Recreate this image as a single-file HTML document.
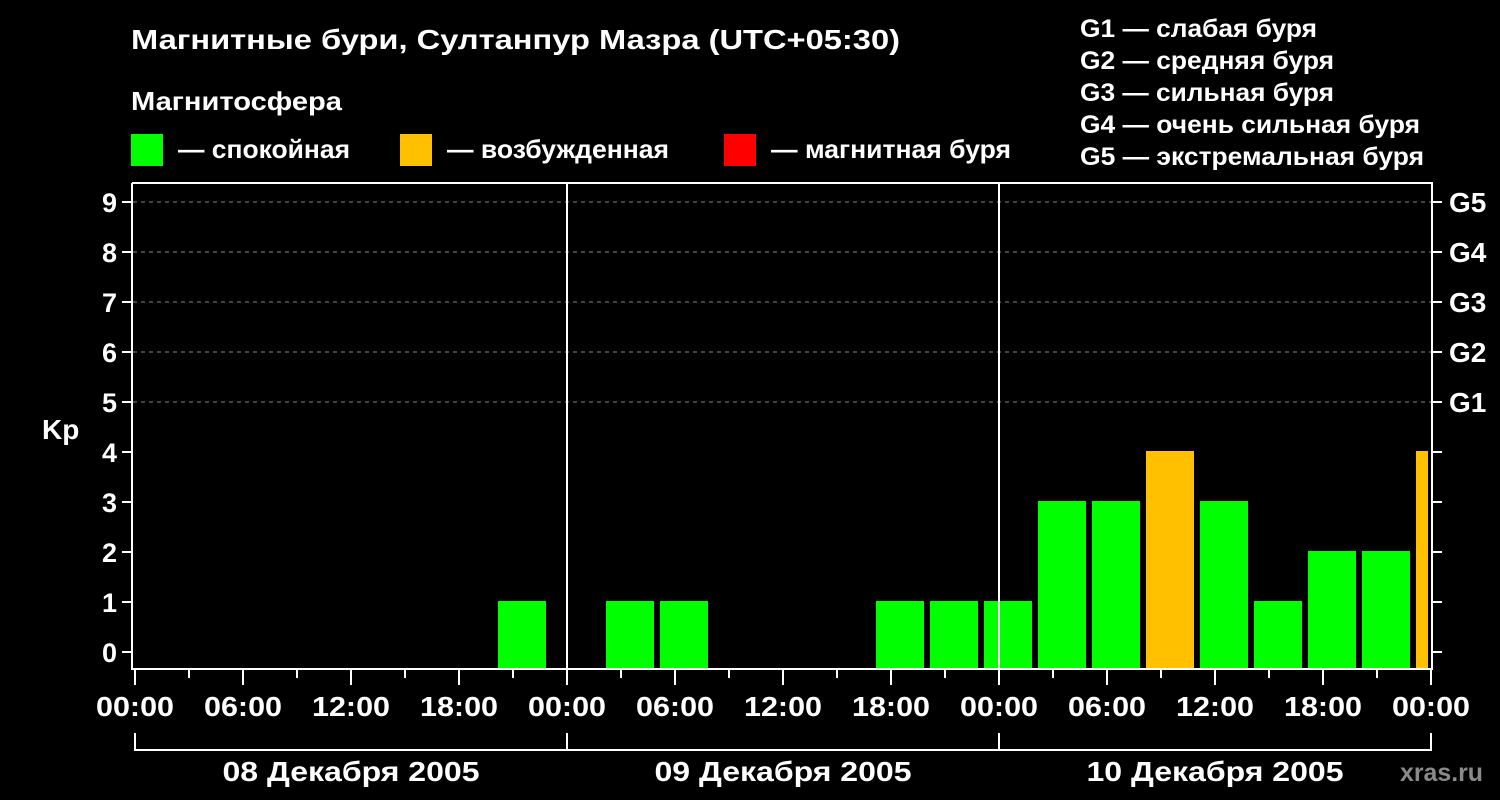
<!DOCTYPE html>
<html><head><meta charset="utf-8"><style>
body{margin:0;background:#000;width:1500px;height:800px;overflow:hidden}
svg{display:block}
text{font-family:"Liberation Sans",sans-serif;font-weight:bold;fill:#fff}
</style></head><body>
<svg width="1500" height="800" viewBox="0 0 1500 800">
<rect width="1500" height="800" fill="#000"/>
<text x="131" y="49" font-size="28" textLength="769" lengthAdjust="spacingAndGlyphs">Магнитные бури, Султанпур Мазра (UTC+05:30)</text>
<text x="131" y="110" font-size="26" textLength="211" lengthAdjust="spacingAndGlyphs">Магнитосфера</text>
<rect x="131" y="134" width="32" height="32" fill="#00ff00"/>
<text x="178" y="158" font-size="26" textLength="172" lengthAdjust="spacingAndGlyphs">— спокойная</text>
<rect x="400" y="134" width="32" height="32" fill="#ffc000"/>
<text x="447" y="158" font-size="26" textLength="222" lengthAdjust="spacingAndGlyphs">— возбужденная</text>
<rect x="724" y="134" width="32" height="32" fill="#ff0000"/>
<text x="771" y="158" font-size="26" textLength="240" lengthAdjust="spacingAndGlyphs">— магнитная буря</text>
<g font-size="25">
<text x="1080" y="37" textLength="237" lengthAdjust="spacingAndGlyphs">G1 — слабая буря</text>
<text x="1080" y="69" textLength="254" lengthAdjust="spacingAndGlyphs">G2 — средняя буря</text>
<text x="1080" y="101" textLength="254" lengthAdjust="spacingAndGlyphs">G3 — сильная буря</text>
<text x="1080" y="133" textLength="340" lengthAdjust="spacingAndGlyphs">G4 — очень сильная буря</text>
<text x="1080" y="165" textLength="344" lengthAdjust="spacingAndGlyphs">G5 — экстремальная буря</text>
</g>
<g stroke="#888" stroke-dasharray="4,4" stroke-width="1">
<line x1="133" y1="202" x2="1432" y2="202"/><line x1="133" y1="252" x2="1432" y2="252"/>
<line x1="133" y1="302" x2="1432" y2="302"/><line x1="133" y1="352" x2="1432" y2="352"/>
<line x1="133" y1="402" x2="1432" y2="402"/>
</g>
<g fill="#00ff00">
<rect x="498" y="601" width="48" height="67"/>
<rect x="606" y="601" width="48" height="67"/>
<rect x="660" y="601" width="48" height="67"/>
<rect x="876" y="601" width="48" height="67"/>
<rect x="930" y="601" width="48" height="67"/>
<rect x="984" y="601" width="48" height="67"/>
<rect x="1038" y="501" width="48" height="167"/>
<rect x="1092" y="501" width="48" height="167"/>
<rect x="1200" y="501" width="48" height="167"/>
<rect x="1254" y="601" width="48" height="67"/>
<rect x="1308" y="551" width="48" height="117"/>
<rect x="1362" y="551" width="48" height="117"/>
</g>
<g fill="#ffc000">
<rect x="1146" y="451" width="48" height="217"/>
<rect x="1416" y="451" width="12" height="217"/>
</g>
<g stroke="#fff" stroke-width="2" fill="none">
<path d="M132 183V669H1432V183H132"/>
<line x1="567" y1="183" x2="567" y2="668"/><line x1="999" y1="183" x2="999" y2="668"/>
<path d="M135 733V750H1431V733M567 733V750M999 733V750"/>
</g>
<g stroke="#fff" stroke-width="2">
<path d="M122 202H131M122 252H131M122 302H131M122 352H131M122 402H131M122 452H131M122 502H131M122 552H131M122 602H131M122 652H131M1432 202H1442M1432 252H1442M1432 302H1442M1432 352H1442M1432 402H1442M1432 452H1442M1432 502H1442M1432 552H1442M1432 602H1442M1432 652H1442"/>
<path d="M135 669V685M189 669V678M243 669V685M297 669V678M351 669V685M405 669V678M459 669V685M513 669V678M567 669V685M621 669V678M675 669V685M729 669V678M783 669V685M837 669V678M891 669V685M945 669V678M999 669V685M1053 669V678M1107 669V685M1161 669V678M1215 669V685M1269 669V678M1323 669V685M1377 669V678M1431 669V685"/>
</g>
<g font-size="27" text-anchor="end">
<text x="117" y="212">9</text><text x="117" y="262">8</text><text x="117" y="312">7</text>
<text x="117" y="362">6</text><text x="117" y="412">5</text><text x="117" y="462">4</text>
<text x="117" y="512">3</text><text x="117" y="562">2</text><text x="117" y="612">1</text>
<text x="117" y="662">0</text>
</g>
<text x="42" y="439" font-size="28">Kp</text>
<g font-size="28">
<text x="1449" y="212">G5</text><text x="1449" y="262">G4</text><text x="1449" y="312">G3</text>
<text x="1449" y="362">G2</text><text x="1449" y="412">G1</text>
</g>
<g font-size="28" text-anchor="middle">
<text x="135" y="716" textLength="78" lengthAdjust="spacingAndGlyphs">00:00</text><text x="243" y="716" textLength="78" lengthAdjust="spacingAndGlyphs">06:00</text><text x="351" y="716" textLength="78" lengthAdjust="spacingAndGlyphs">12:00</text><text x="459" y="716" textLength="78" lengthAdjust="spacingAndGlyphs">18:00</text>
<text x="567" y="716" textLength="78" lengthAdjust="spacingAndGlyphs">00:00</text><text x="675" y="716" textLength="78" lengthAdjust="spacingAndGlyphs">06:00</text><text x="783" y="716" textLength="78" lengthAdjust="spacingAndGlyphs">12:00</text><text x="891" y="716" textLength="78" lengthAdjust="spacingAndGlyphs">18:00</text>
<text x="999" y="716" textLength="78" lengthAdjust="spacingAndGlyphs">00:00</text><text x="1107" y="716" textLength="78" lengthAdjust="spacingAndGlyphs">06:00</text><text x="1215" y="716" textLength="78" lengthAdjust="spacingAndGlyphs">12:00</text><text x="1323" y="716" textLength="78" lengthAdjust="spacingAndGlyphs">18:00</text>
<text x="1431" y="716" textLength="78" lengthAdjust="spacingAndGlyphs">00:00</text>
<text x="351" y="781" textLength="257" lengthAdjust="spacingAndGlyphs">08 Декабря 2005</text>
<text x="783" y="781" textLength="257" lengthAdjust="spacingAndGlyphs">09 Декабря 2005</text>
<text x="1215" y="781" textLength="257" lengthAdjust="spacingAndGlyphs">10 Декабря 2005</text>
</g>
<text x="1400" y="781" font-size="25" style="fill:#8a8a8a" textLength="83" lengthAdjust="spacingAndGlyphs">xras.ru</text>
</svg>
</body></html>
